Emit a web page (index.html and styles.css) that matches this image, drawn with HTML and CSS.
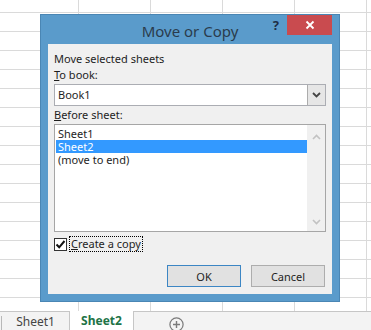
FILE: index.html
```html
<!DOCTYPE html>
<html>
<head>
<meta charset="utf-8">
<link rel="stylesheet" href="styles.css">
</head>
<body>
<div class="app">
  <div class="grid">
    <div class="dialog">
      <div class="titlebar">
        <div></div>
        <div class="title">Move or Copy</div>
        <div class="controls">
          <span class="help">?</span>
          <span class="close">
            <svg width="10" height="10" viewBox="0 0 10 10"><path d="M1.5 1.5 L8.5 8.5 M8.5 1.5 L1.5 8.5" stroke="#fff" stroke-width="1.8"/></svg>
          </span>
        </div>
      </div>
      <div class="panel">
        <div class="label">Move selected sheets</div>
        <div class="label"><u>T</u>o book:</div>
        <div class="combo">
          <span class="combo-text">Book1</span>
          <span class="combo-btn">
            <svg width="9" height="6" viewBox="0 0 9 6"><path d="M1 1 L4.5 4.5 L8 1" fill="none" stroke="#444" stroke-width="1.8"/></svg>
          </span>
        </div>
        <div class="label label-gap"><u>B</u>efore sheet:</div>
        <div class="listbox">
          <div class="items">
            <div class="item">Sheet1</div>
            <div class="item selected">Sheet2</div>
            <div class="item">(move to end)</div>
          </div>
          <div class="scroll">
            <svg width="9" height="6" viewBox="0 0 9 6"><path d="M1 5 L4.5 1.5 L8 5" fill="none" stroke="#c2c2c2" stroke-width="1.6"/></svg>
            <svg width="9" height="6" viewBox="0 0 9 6"><path d="M1 1 L4.5 4.5 L8 1" fill="none" stroke="#c2c2c2" stroke-width="1.6"/></svg>
          </div>
        </div>
        <div class="check-row">
          <span class="checkbox">
            <svg width="11" height="11" viewBox="0 0 11 11"><path d="M1.5 5.5 L4.2 8.3 L9.5 2" fill="none" stroke="#111" stroke-width="2"/></svg>
          </span>
          <span class="check-label"><u>C</u>reate a copy</span>
        </div>
        <div class="buttons">
          <button class="btn btn-default">OK</button>
          <button class="btn">Cancel</button>
        </div>
      </div>
    </div>
  </div>
  <div class="tabbar">
    <span class="tab-sep"></span>
    <span class="tab">Sheet1</span>
    <span class="tab active">Sheet2</span>
    <span class="add">
      <svg width="15" height="15" viewBox="0 0 15 15"><circle cx="7.5" cy="7.5" r="6.6" fill="none" stroke="#7a7a7a" stroke-width="1.2"/><path d="M7.5 4 V11 M4 7.5 H11" stroke="#7a7a7a" stroke-width="1.4"/></svg>
    </span>
  </div>
</div>
</body>
</html>
```

FILE: styles.css
```css
* { box-sizing: border-box; }
html, body { margin: 0; padding: 0; }
body {
  width: 371px;
  height: 330px;
  overflow: hidden;
  background: #fff;
  font-family: "Noto Sans", "Open Sans", sans-serif;
  font-size: 11px;
  color: #1e1e1e;
}
.app { display: flex; flex-direction: column; height: 330px; }
.grid {
  position: relative;
  height: 311px;
  background-color: #fff;
  background-image:
    repeating-linear-gradient(to bottom, transparent 0 18px, #dadada 18px 19px),
    repeating-linear-gradient(to right, transparent 0 71px, #dadada 71px 72px);
  background-position: 0 -6px, 7px 0;
}
.dialog {
  position: absolute;
  left: 40px;
  top: 14px;
  width: 300px;
  height: 288px;
  background: #5a9bcb;
  border: 1px solid #4a86b4;
  padding: 0 7px 7px 7px;
  display: flex;
  flex-direction: column;
}
.titlebar {
  height: 29px;
  display: grid;
  grid-template-columns: 1fr auto 1fr;
  align-items: start;
}
.title {
  font-size: 15px;
  color: #2a3b4d;
  padding-top: 6px;
  line-height: 20px;
  white-space: nowrap;
}
.controls {
  display: flex;
  justify-content: flex-end;
  align-items: flex-start;
}
.help {
  font-weight: bold;
  font-size: 13px;
  color: #1e2e44;
  margin-top: 2px;
  margin-right: 8px;
  line-height: 16px;
}
.close {
  width: 45px;
  height: 20px;
  background: #c94b4f;
  display: flex;
  align-items: center;
  justify-content: center;
}
.panel {
  flex: 1;
  background: #f0f0f0;
  padding: 7px 6px 0 6px;
  display: flex;
  flex-direction: column;
}
.label { line-height: 16px; height: 16px; white-space: nowrap; }
.label-gap { margin-top: 1px; }
.combo {
  margin-top: 1px;
  height: 22px;
  background: #fff;
  border: 1px solid #abadb3;
  display: flex;
  align-items: stretch;
}
.combo-text { flex: 1; padding-left: 3px; line-height: 20px; }
.combo-btn {
  width: 18px;
  background: #e6e6e6;
  border-left: 1px solid #acacac;
  display: flex;
  align-items: center;
  justify-content: center;
}
.listbox {
  margin-top: 1px;
  height: 108px;
  background: #fff;
  border: 1px solid #a6a6a6;
  display: flex;
}
.items { flex: 1; padding: 2px 0 0 1px; }
.item { height: 13px; line-height: 13px; padding-left: 2px; overflow: hidden; }
.item.selected { background: #3399ff; color: #fff; }
.scroll {
  width: 18px;
  background: #f0f0f0;
  display: flex;
  flex-direction: column;
  justify-content: space-between;
  align-items: center;
  padding: 9px 0 6px;
}
.check-row {
  margin-top: 4px;
  height: 16px;
  display: flex;
  align-items: center;
}
.checkbox {
  width: 13px;
  height: 13px;
  border: 1px solid #333;
  background: #fff;
  display: flex;
  align-items: center;
  justify-content: center;
}
.check-label {
  margin-left: 2px;
  border: 1px dotted #000;
  padding: 0 1px;
  line-height: 14px;
}
.buttons {
  margin-top: 13px;
  display: flex;
  justify-content: flex-end;
  gap: 10px;
  padding-right: 1px;
}
.btn {
  width: 74px;
  height: 22px;
  background: #e1e1e1;
  border: 1px solid #adadad;
  font-family: inherit;
  font-size: 11px;
  color: #1e1e1e;
  padding: 0;
}
.btn-default { border-color: #3c86c4; }
.tabbar {
  height: 19px;
  border-top: 1px solid #c6c6c6;
  background: #f3f3f3;
  display: flex;
  align-items: stretch;
  font-family: "Noto Sans", sans-serif;
  font-size: 12px;
}
.tab-sep { width: 2px; border-right: 1px solid #b8b8b8; margin-top: 4px; }
.tab {
  width: 68px;
  text-align: center;
  color: #444;
  line-height: 20px;
  border-right: 1px solid #c6c6c6;
}
.active {
  width: 64px;
  background: #fff;
  color: #217346;
  font-weight: bold;
  margin-top: -1px;
  border-right: 1px solid #c6c6c6;
}
.add { margin-left: 35px; padding-top: 5px; }
```
